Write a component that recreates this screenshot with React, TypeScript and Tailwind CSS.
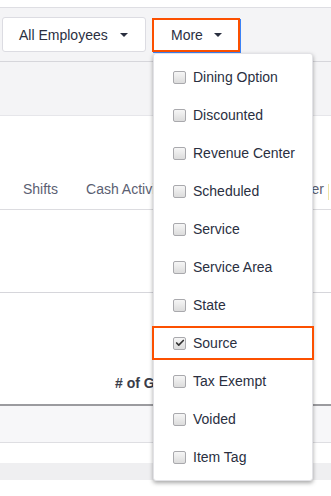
import { Check } from 'lucide-react'

const options = [
  'Dining Option',
  'Discounted',
  'Revenue Center',
  'Scheduled',
  'Service',
  'Service Area',
  'State',
  'Source',
  'Tax Exempt',
  'Voided',
  'Item Tag',
]

function Caret() {
  return (
    <svg width="8" height="4" viewBox="0 0 8 4" className="fill-[#2a2f3f]">
      <path d="M0 0h8L4 4z" />
    </svg>
  )
}

function Box({ checked }: { checked: boolean }) {
  return (
    <span className="flex h-[13px] w-[13px] shrink-0 items-center justify-center rounded-[2px] border border-[#a9a9ad] bg-gradient-to-b from-[#f6f6f6] to-[#dcdcdc]">
      {checked && <Check className="h-[10px] w-[10px] text-[#333]" strokeWidth={4} />}
    </span>
  )
}

function Menu() {
  return (
    <div className="absolute left-[1px] top-[35px] z-10 w-[160px] rounded-[3px] border border-[#e2e2e6] bg-white py-[4px] shadow-[0_2px_4px_rgba(0,0,0,0.35)]">
      {options.map(o => (
        <div key={o} className="relative flex h-[38px] items-center gap-[7px] pl-[19px] text-[14px] text-[#2a2f3f]">
          <Box checked={o === 'Source'} />
          <span>{o}</span>
          {o === 'Source' && (
            <div className="absolute -left-[2px] -right-[2px] top-[2px] bottom-[2px] border-2 border-[#fc5000]" />
          )}
        </div>
      ))}
    </div>
  )
}

export default function App() {
  return (
    <div className="relative h-[496px] w-[331px] overflow-hidden bg-white" style={{ fontFamily: '"Liberation Sans", Arial, sans-serif' }}>
      <div className="h-[8px] border-b border-[#dedee3] bg-white" />

      {/* toolbar */}
      <div className="flex h-[54px] items-start gap-[6px] border-b border-[#d6d6db] bg-[#f4f4f6] pl-[2px] pt-[9px]">
        <button className="flex h-[35px] w-[144px] items-center gap-[12px] rounded-[3px] border border-[#dcdce2] bg-white pl-[16px] pt-[1px] text-[14px] text-[#2a2f3f]">
          All Employees
          <Caret />
        </button>
        <div className="relative mt-[1px]">
          <button className="flex h-[34px] w-[88px] items-center gap-[11px] border-2 border-[#fc5000] bg-white pl-[17px] text-[14px] text-[#2a2f3f] shadow-[1px_1px_0_#3b82f6]">
            More
            <Caret />
          </button>
          <Menu />
        </div>
      </div>

      <div className="h-[54px] border-b border-[#e6e6ea] bg-[#f4f4f6]" />

      {/* tabs */}
      <div className="flex h-[94px] items-end gap-[28px] whitespace-nowrap border-b border-[#dcdce0] pb-[9px] pl-[23px] text-[14px] text-[#5b6072]">
        <span>Shifts</span>
        <span>Cash Activity</span>
        <span className="ml-[31px]">Sales by Server</span>
        <span className="-ml-[24px] h-[16px] w-0 border-l border-[#efe4a6]" />
      </div>

      <div className="h-[83px] border-b border-[#d6d6db]" />

      {/* table head */}
      <div className="flex h-[113px] items-end border-b-2 border-[#9b9b9f] pb-[10px] pl-[115px]">
        <span className="text-[14px] font-bold text-[#3a3d4a]"># of Guests</span>
      </div>
      <div className="h-[37px] border-b border-[#dedee2] bg-[#f7f7f9]" />
      <div className="h-[20px]" />
      <div className="h-[17px] bg-[#efeff1]" />
    </div>
  )
}
